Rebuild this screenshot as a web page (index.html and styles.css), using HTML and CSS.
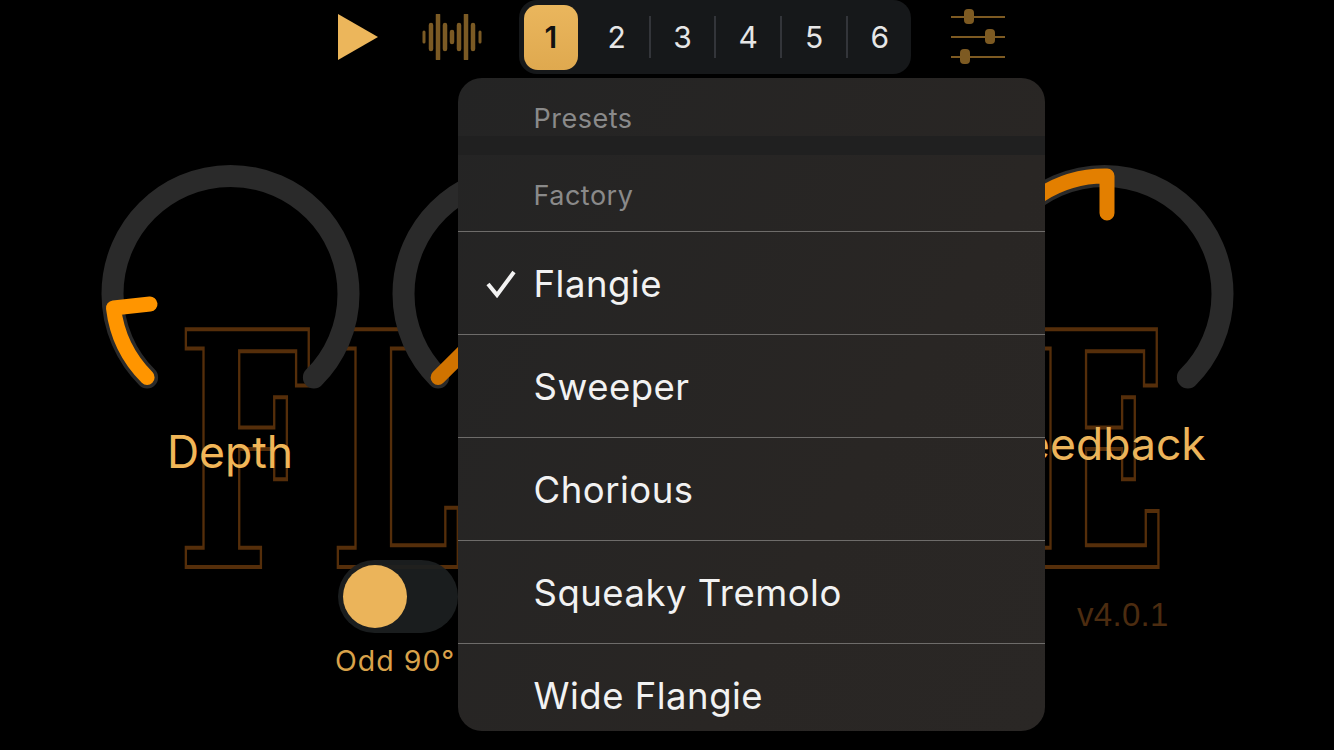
FILE: index.html
```html
<!DOCTYPE html>
<html lang="en">
<head>
    <meta charset="UTF-8">
    <meta name="viewport" content="width=device-width, initial-scale=1.0">
    <title>Presets</title>
    <link rel="stylesheet" href="styles.css">
</head>
<body>
    <div class="app">
        <!-- outlined logo behind the controls -->
        <svg class="logo" viewBox="0 0 1334 750" aria-hidden="true">
            <text class="logo-letter" transform="translate(177 567) scale(0.58 1)">F</text>
            <text class="logo-letter" transform="translate(329 567) scale(0.58 1)">L</text>
            <text class="logo-letter" transform="translate(1024 567) scale(0.58 1)">E</text>
        </svg>

        <header class="topbar">
            <svg class="play" viewBox="0 0 40 46"><path d="M0 0 L40 23 L0 46 Z"/></svg>
            <svg class="wave" viewBox="0 0 60 46">
                <path class="wave-thin" d="M2 18v10M58 18v10"/>
                <path d="M9 11v24M16 1v44M23 11v24M30 18v10M37 11v24M44 1v44M51 11v24"/>
            </svg>
            <div class="segments">
                <button class="segment active">1</button>
                <button class="segment">2</button>
                <button class="segment">3</button>
                <button class="segment">4</button>
                <button class="segment">5</button>
                <button class="segment">6</button>
            </div>
            <svg class="sliders" viewBox="0 0 54 50">
                <path d="M0 5h54M0 25h54M0 45h54"/>
                <rect x="13" y="-3" width="10" height="15" rx="4"/>
                <rect x="34" y="17" width="10" height="15" rx="4"/>
                <rect x="9" y="37" width="10" height="15" rx="4"/>
            </svg>
        </header>

        <section class="knobs">
            <div class="knob">
                <svg viewBox="0 0 259 226">
                    <path class="track" d="M46.100 212.400 A118 118 0 1 1 212.900 212.400"/>
                    <path class="value" d="M46.100 212.400 A118 118 0 0 1 12.500 143 L49 139"/>
                </svg>
                <div class="knob-label">Depth</div>
            </div>
            <div class="knob">
                <svg viewBox="0 0 259 226">
                    <path class="track" d="M46.100 212.400 A118 118 0 1 1 212.900 212.400"/>
                    <path class="value value-dim" d="M46.100 212.400 L129 130"/>
                </svg>
            </div>
            <div class="knob knob-last">
                <svg viewBox="0 0 259 226">
                    <path class="track" d="M46.100 212.400 A118 118 0 1 1 212.900 212.400"/>
                    <path class="value value-mid" d="M46.100 212.400 A118 118 0 0 1 132 11 L132 48"/>
                </svg>
                <div class="knob-label knob-label-high">Feedback</div>
            </div>
        </section>

        <section class="bottom">
            <div class="switch-wrap">
                <div class="switch"><span class="switch-thumb"></span></div>
                <div class="switch-label">Odd 90°</div>
            </div>
            <div class="version">v4.0.1</div>
        </section>

        <div class="menu">
            <div class="menu-title">Presets</div>
            <div class="menu-gap"></div>
            <div class="menu-title menu-title-group">Factory</div>
            <ul class="menu-list">
                <li class="menu-item">
                    <svg class="check" viewBox="0 0 30 28"><path d="M2 14 L11 25 L28 2"/></svg>
                    Flangie
                </li>
                <li class="menu-item">Sweeper</li>
                <li class="menu-item">Chorious</li>
                <li class="menu-item">Squeaky Tremolo</li>
                <li class="menu-item">Wide Flangie</li>
            </ul>
        </div>
    </div>
</body>
</html>
```

FILE: styles.css
```css
* { box-sizing: border-box; }
body { margin: 0; background-color: #000; font-family: "Inter", "Liberation Sans", sans-serif; overflow: hidden; }
.app { position: relative; width: 1334px; height: 750px; overflow: hidden; }

.logo { position: absolute; left: 0; top: 0; width: 1334px; height: 750px; }
.logo-letter { font-family: "DejaVu Serif", serif; font-weight: bold; font-size: 326px; fill: none; stroke: #552e0a; stroke-width: 4px; }

.topbar { position: relative; display: flex; align-items: center; height: 74px; padding-left: 338px; }
.play { width: 40px; height: 46px; margin-right: 44px; fill: #ecb65b; }
.wave { width: 60px; height: 46px; margin-right: 37px; fill: none; stroke: #7b5a24; stroke-width: 4.5px; stroke-linecap: round; }
.wave-thin { stroke-width: 3px; }
.segments { display: grid; grid-template-columns: repeat(6, 65.8px); width: 392px; height: 74px; background-color: #16181a; border-radius: 18px; align-items: center; }
.segment { position: relative; left: -1px; height: 65px; margin: 0 6px; padding: 0; background: none; border: none; border-radius: 14px; color: #e6e6e6; font-family: "Inter", sans-serif; font-size: 30px; }
.segment + .segment::after { content: ""; position: absolute; left: -7px; top: 11px; height: 42px; width: 2px; background-color: #33353a; }
.segment:nth-child(2)::after { display: none; }
.segment.active { background: linear-gradient(#eab65d, #dfa94f); color: #111; font-weight: 600; }
.sliders { width: 54px; height: 50px; margin-left: 40px; overflow: visible; fill: #7d5a22; }
.sliders path { fill: none; stroke: #7d5a22; stroke-width: 2px; }

.knobs { position: relative; display: grid; grid-template-columns: repeat(4, 259px); column-gap: 32.4px; margin-top: 91px; padding-left: 100.500px; height: 320px; }
.knob { text-align: center; }
.knob svg { display: block; width: 259px; height: 226px; fill: none; overflow: visible; }
.knob-last { grid-column: 4; }
.track { stroke: #2a2a2a; stroke-width: 22px; stroke-linecap: round; }
.value { stroke: #ff9500; stroke-width: 15px; stroke-linecap: round; stroke-linejoin: round; }
.value-dim { stroke: #d07300; }
.value-mid { stroke: #e37f00; }
.knob-label { margin-top: 35px; color: #f1b658; font-size: 44.5px; line-height: 52px; }
.knob-label-high { margin-top: 27px; padding-right: 3px; color: #ecb45a; }

.bottom { position: relative; display: flex; margin-top: 75px; padding-left: 336px; }
.switch-wrap { width: 122px; }
.switch { width: 120px; height: 73px; margin-left: 2px; padding: 5px; background-color: rgba(28, 32, 33, 0.92); border-radius: 37px; }
.switch-thumb { display: block; width: 64px; height: 63px; border-radius: 50%; background-color: #ebb45a; }
.switch-label { margin-top: 11px; margin-left: -1px; color: #d9a24a; font-size: 28.5px; letter-spacing: 1px; line-height: 34px; white-space: nowrap; }
.version { margin: 33px 0 0 619px; color: #4c2c10; font-family: "Liberation Sans", sans-serif; font-size: 33px; letter-spacing: 0.3px; line-height: 44px; }

.menu { position: absolute; left: 458px; top: 78px; width: 587px; height: 653px; overflow: hidden; background: linear-gradient(120deg, #242424, #292624 65%, #2a2725); border-radius: 24px; }
.menu-title { height: 58px; padding: 26px 0 0 75.500px; color: #8a8a8a; font-size: 27px; letter-spacing: 0.5px; line-height: 30px; }
.menu-gap { height: 19px; background-color: #202020; }
.menu-title-group { height: 76px; padding-top: 26px; }
.menu-list { margin: 0; padding: 0; list-style: none; }
.menu-item { position: relative; height: 103px; padding-left: 75.500px; border-top: 1px solid #6e6c6a; color: #f2f2f2; font-size: 36.500px; letter-spacing: 0.5px; line-height: 105px; }
.check { position: absolute; left: 28px; top: 38px; width: 30px; height: 28px; fill: none; stroke: #f2f2f2; stroke-width: 4px; }
```
